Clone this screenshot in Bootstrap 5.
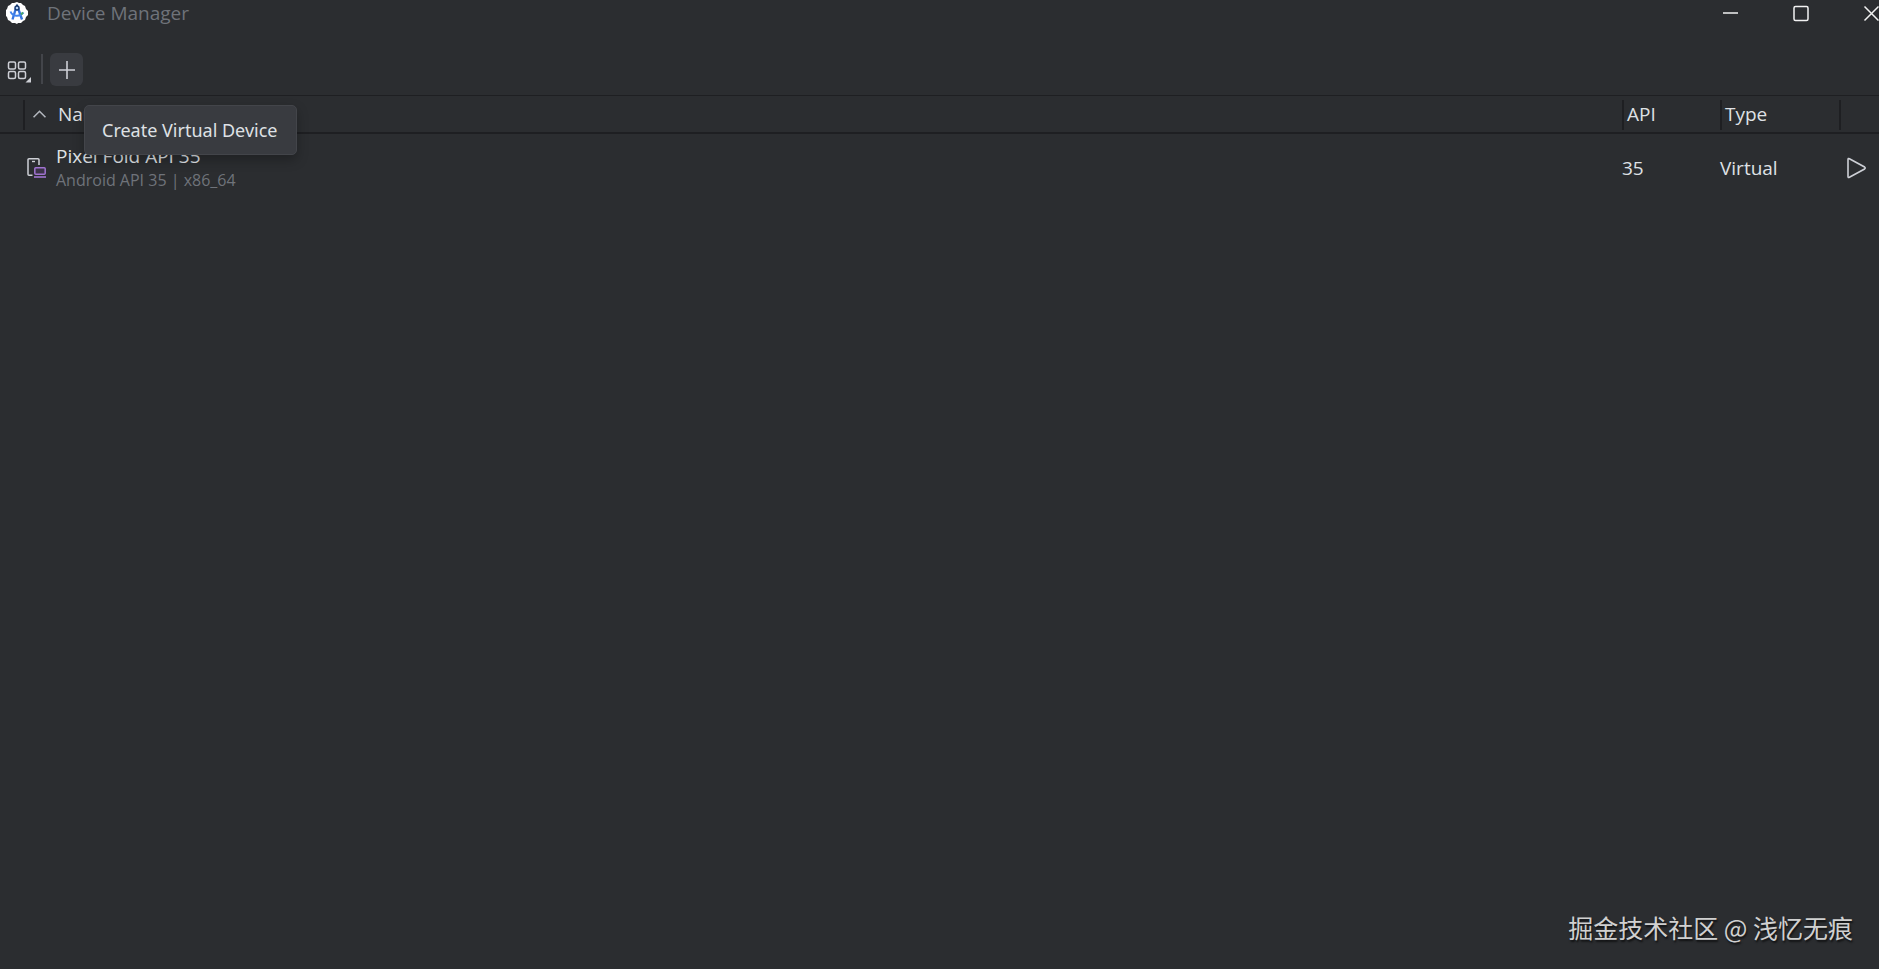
<!DOCTYPE html>
<html lang="en" data-bs-theme="dark">
<head>
<meta charset="utf-8">
<meta name="viewport" content="width=device-width, initial-scale=1">
<title>Device Manager</title>
<link href="https://cdn.jsdelivr.net/npm/bootstrap@5.3.0/dist/css/bootstrap.min.css" rel="stylesheet">
<style>
  body { background: #2b2d30; color: #dfe1e5; font: 19px/24px "Open Sans", "Noto Sans", "Noto Sans CJK SC", sans-serif; overflow: hidden; }
  svg { display: block; flex: none; }
  .title-bar { height: 40px; padding: 2px 0 0 6px; }
  .title-bar h1 { font-size: 19px; line-height: 22px; margin-left: 19px; color: #6f737a; }
  .plain-btn { border: 0; padding: 0; background: none; color: #ced0d6; display: flex; }
  .window-controls { gap: 54px; padding-top: 2px; }
  .window-controls .plain-btn { color: #f2f2f2; }
  .tool-bar { height: 55px; padding: 13px 0 0 7px; }
  .tool-divider { width: 2px; height: 30px; margin: 1px 7px 0 10px; background: #43454a; }
  .add-btn { width: 33px; height: 33px; border-radius: 6px; background: #393b40; align-items: center; justify-content: center; }
  .tip { position: absolute; top: 52px; left: 34px; padding: 12px 19px 12px 17px; border: 1px solid #43454a; border-radius: 5px; background: #393b40; color: #dfe1e5; font-family: "Noto Sans", sans-serif; font-size: 18px; white-space: nowrap; box-shadow: 0 5px 12px #0004; z-index: 2; }
  .devices { table-layout: fixed; width: 100%; border-collapse: separate; border-spacing: 0; }
  .devices th { height: 39px; padding: 0 5px; border: solid #1e1f22; border-width: 1px 0 2px; font-weight: 400; background: linear-gradient(#1e1f22, #1e1f22) 0 4px / 2px 30px no-repeat; }
  .devices th:first-child { background: none; }
  .devices td { height: 68px; padding: 0; }
  .col-edge { width: 23px; }
  .col-api { width: 98px; }
  .col-type { width: 119px; }
  .col-run { width: 40px; }
  .sort-head { gap: 12px; padding-left: 5px; }
  .device { gap: 9px; padding-left: 4px; }
  .device-sub { font-size: 16px; color: #6f737a; }
  .watermark { padding: 0 26px 26px 0; font-size: 25px; line-height: 32px; color: #d0d0d0; text-shadow: 1px 2px 2px #000a; font-family: "Noto Sans CJK SC", sans-serif; }
</style>
</head>
<body class="d-flex flex-column min-vh-100">
  <header class="title-bar d-flex align-items-start">
    <svg width="22" height="22" viewBox="0 0 22 22" fill="none">
      <path d="M11 0l2 1 2 0 2 2 2 1 1 3 2 2v4l-2 2-1 3-2 1-2 2-3 0-1 1-2-1-3 0-2-2-2-1-1-3-2-2V9l2-2 1-3 2-1 2-2 2 0z" fill="#fff"/>
      <path d="M10 6L6.500 17.500M12 6l4 11.500" stroke="#3775df" stroke-width="2.400"/>
      <path d="M4.500 9.500c2 5 9 6 13 1" stroke="#4284ee" stroke-width="2"/>
      <path d="M15 12.500l2-2" stroke="#48a86a" stroke-width="2"/>
      <path d="M11 2.500v2" stroke="#173a70" stroke-width="2"/>
      <circle cx="11" cy="6" r="2" fill="#b9d2f7" stroke="#173a70" stroke-width="1.400"/>
    </svg>
    <h1 class="fw-normal mb-0">Device Manager</h1>
    <div class="window-controls d-flex ms-auto">
      <button class="plain-btn" type="button" aria-label="Minimize"><svg width="16" height="18" viewBox="0 0 16 18"><path d="M0 9h15" stroke="currentColor" stroke-width="1.500"/></svg></button>
      <button class="plain-btn" type="button" aria-label="Maximize"><svg width="16" height="18" viewBox="0 0 16 18" fill="none"><rect x="1" y="2.500" width="14" height="14" rx="1.500" stroke="currentColor" stroke-width="1.500"/></svg></button>
      <button class="plain-btn" type="button" aria-label="Close"><svg width="16" height="18" viewBox="0 0 16 18"><path d="M1.500 2.500l14 14M15.500 2.500l-14 14" stroke="currentColor" stroke-width="1.500"/></svg></button>
    </div>
  </header>

  <div class="tool-bar d-flex align-items-start" role="toolbar" aria-label="Device tools">
    <button class="plain-btn pt-2" type="button" aria-label="Group devices">
      <svg width="24" height="24" viewBox="0 0 24 24" fill="none" stroke="currentColor" stroke-width="1.500">
        <rect x="1.500" y="1" width="7" height="7" rx="1.500"/><rect x="11.500" y="1" width="7" height="7" rx="1.500"/>
        <rect x="1.500" y="10.500" width="7" height="7" rx="1.500"/><rect x="11.500" y="10.500" width="7" height="7" rx="1.500"/>
        <path d="M24 16v5.500h-5.500z" fill="currentColor" stroke="none"/>
      </svg>
    </button>
    <span class="tool-divider"></span>
    <div class="position-relative">
      <button class="plain-btn add-btn" type="button" aria-label="Add" aria-describedby="add-tip">
        <svg width="18" height="18" viewBox="0 0 18 18"><path d="M9 0v18M1 9h16" stroke="currentColor" stroke-width="1.600"/></svg>
      </button>
      <div class="tip" id="add-tip" role="tooltip">Create Virtual Device</div>
    </div>
  </div>

  <main class="flex-grow-1">
    <table class="devices">
      <colgroup><col class="col-edge"><col><col class="col-api"><col class="col-type"><col class="col-run"></colgroup>
      <thead>
        <tr>
          <th></th>
          <th scope="col"><div class="sort-head d-flex align-items-center">
            <svg width="13" height="8" viewBox="0 0 13 8" fill="none"><path d="M.5 7.300l6-6 6 6" stroke="#b4b8bf" stroke-width="1.600"/></svg>Name</div></th>
          <th scope="col">API</th>
          <th scope="col">Type</th>
          <th></th>
        </tr>
      </thead>
      <tbody>
        <tr>
          <td></td>
          <td><div class="device d-flex align-items-center">
            <svg width="20" height="20" viewBox="0 0 20 20" fill="none">
              <path d="M5.500 17.300H2a1 1 0 0 1-1-1V1.800a1 1 0 0 1 1-1h9a1 1 0 0 1 1 1V7" stroke="#ced0d6" stroke-width="1.500"/>
              <path d="M5 3.500h3" stroke="#ced0d6" stroke-width="1.400"/>
              <rect x="7.800" y="9.800" width="10.400" height="6.400" rx="1" fill="#3c3348" stroke="#a073d0" stroke-width="1.500"/>
              <path d="M7 19h12" stroke="#a073d0" stroke-width="1.600"/>
            </svg>
            <div><div>Pixel Fold API 35</div><div class="device-sub">Android API 35 | x86_64</div></div>
          </div></td>
          <td>35</td>
          <td>Virtual</td>
          <td><button class="plain-btn ms-2" type="button" aria-label="Run device">
            <svg width="20" height="22" viewBox="0 0 20 22" fill="none"><path d="M1 2.500v17q0 1.500 1.400.8L17.600 12q1.200-1 0-2L2.400 1.700Q1 1 1 2.500z" stroke="currentColor" stroke-width="1.600"/></svg>
          </button></td>
        </tr>
      </tbody>
    </table>
  </main>

  <footer class="watermark text-end">掘金技术社区 @ 浅忆无痕</footer>
<script src="https://cdn.jsdelivr.net/npm/bootstrap@5.3.0/dist/js/bootstrap.bundle.min.js"></script>
</body>
</html>
